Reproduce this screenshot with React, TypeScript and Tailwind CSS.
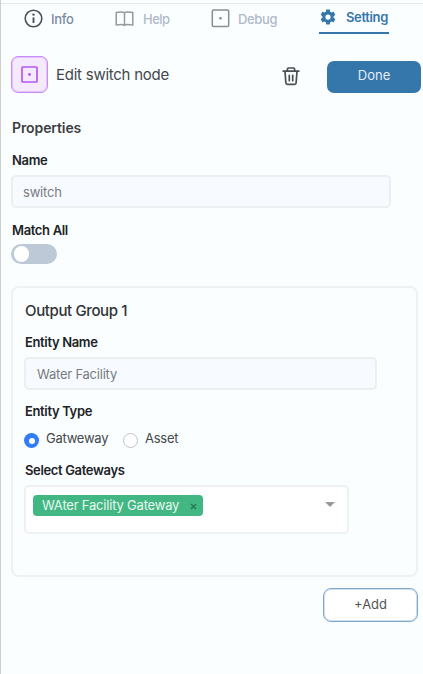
import React from "react";

const InfoIcon = () => (
  <svg width="20" height="20" viewBox="0 0 20 20" fill="none" stroke="#4d5157" strokeWidth="1.6">
    <circle cx="9.500" cy="9.500" r="8.300" />
    <path d="M9.500 8.400v5.600" strokeWidth="1.900" />
    <circle cx="9.500" cy="5.600" r="1.200" fill="#4d5157" stroke="none" />
  </svg>
);

const BookIcon = () => (
  <svg width="20" height="18" viewBox="0 0 20 18" fill="none" stroke="#96999c" strokeWidth="1.5" strokeLinejoin="round">
    <path d="M9.500 2.800C8.700 1.900 7.700 1.900 6.500 1.900c-1.800 0-3.500.1-5.300.6v12.600c1.800-.5 3.500-.7 5.300-.7 1.300 0 2.200.2 3 1 .8-.8 1.700-1 3-1 1.800 0 3.500.2 5.300.7V2.500c-1.800-.5-3.500-.6-5.300-.6-1.200 0-2.200 0-3 .9zM9.500 2.800v12.600" />
  </svg>
);

const DebugIcon = () => (
  <svg width="19" height="19" viewBox="0 0 19 19" fill="none">
    <rect x="1.300" y="1" width="16.400" height="16.400" rx="1.200" stroke="#8b8e91" strokeWidth="1.500" />
    <circle cx="9.500" cy="9.300" r="1.300" fill="#8b8e91" />
  </svg>
);

const GearIcon = () => (
  <svg width="18" height="18" viewBox="0 0 24 24" fill="#3576ab">
    <path d="M19.430 12.980c.04-.32.070-.64.070-.98s-.03-.66-.07-.98l2.110-1.650c.19-.15.240-.42.120-.64l-2-3.460c-.12-.22-.39-.3-.61-.22l-2.490 1c-.52-.4-1.080-.73-1.690-.98l-.38-2.650C14.460 2.180 14.250 2 14 2h-4c-.25 0-.46.18-.49.42l-.38 2.650c-.61.25-1.170.59-1.690.98l-2.490-1c-.23-.09-.49 0-.61.22l-2 3.460c-.13.22-.07.49.12.64l2.110 1.650c-.04.32-.07.65-.07.98s.03.66.07.98l-2.110 1.650c-.19.15-.24.42-.12.64l2 3.460c.12.22.39.3.61.22l2.490-1c.52.4 1.080.73 1.690.98l.38 2.650c.03.24.24.42.49.42h4c.25 0 .46-.18.49-.42l.38-2.650c.61-.25 1.170-.59 1.690-.98l2.490 1c.23.09.49 0 .61-.22l2-3.460c.12-.22.07-.49-.12-.64l-2.110-1.650zM12 15.500A3.500 3.500 0 1 1 12 8.500a3.500 3.500 0 0 1 0 7z" />
  </svg>
);

const TrashIcon = () => (
  <svg width="18" height="20" viewBox="0 0 18 20" fill="none" stroke="#4b4f54" strokeWidth="1.700" strokeLinecap="round" strokeLinejoin="round">
    <path d="M1.200 5.200h15.600M5 5l.6-2.200c.1-.5.400-.8.900-.8h5c.5 0 .8.300.9.800L13 5M3 5.500l.9 11.500c.1.900.6 1.400 1.500 1.400h7.200c.9 0 1.400-.5 1.500-1.400L15 5.500M7.300 9.300v5.400M10.700 9.300v5.400" />
  </svg>
);

const label = "h-5 whitespace-nowrap text-[13px] font-semibold leading-5 tracking-[-0.35px] text-[#202326]";

export default function App() {
  return (
    <div className="h-[674px] w-[423px] overflow-hidden border-l border-[#cdcfd1] bg-[#fbfeff] font-['Inter',sans-serif]">
      <div className="h-1 border-b border-[#e6e7ea] bg-[#fbfeff]" />
      <nav className="flex h-[30px] pl-[23px] text-[13px] font-medium leading-5">
        <div className="flex w-[91px] gap-[7px] pt-[5px]">
          <InfoIcon />
          <span className="tracking-[-0.3px] text-[#7b8ba3]">Info</span>
        </div>
        <div className="flex w-24 gap-2 pt-[5px] text-[#b0b9c8]">
          <span className="pt-px"><BookIcon /></span>
          <span className="tracking-[-0.5px]">Help</span>
        </div>
        <div className="flex w-[108px] gap-2 pt-[5px] text-[#b0b9c8]">
          <DebugIcon />
          <span className="tracking-[-0.35px]">Debug</span>
        </div>
        <div className="flex h-[30px] w-[70px] gap-[9px] border-b-2 border-[#3576ab] pt-[3px] text-[#3576ab]">
          <span className="pt-px"><GearIcon /></span>
          <span className="font-semibold tracking-[-0.35px]">Setting</span>
        </div>
      </nav>

      <header className="mt-[22px] flex h-[38px] items-center pl-[10px]">
        <div className="-mt-px flex h-[37px] w-[37px] items-center justify-center rounded-[7px] border border-[#c98cfa] bg-[#f5e9fe] shadow-[inset_0_0_0_1px_#e2c3fc]">
          <svg width="17" height="17" viewBox="0 0 17 17" fill="none">
            <rect x="1" y="1" width="15" height="15" rx="0.800" stroke="#b657f4" strokeWidth="1.700" />
            <circle cx="8.500" cy="8.500" r="1.400" fill="#b657f4" />
          </svg>
        </div>
        <h1 className="ml-2 w-[226px] whitespace-nowrap text-[15px] leading-5 tracking-[-0.25px] text-[#44474a]">Edit switch node</h1>
        <span className="mt-[2px]"><TrashIcon /></span>
        <button className="ml-[27px] mt-[3px] h-8 w-[94px] shrink-0 rounded-[7px] bg-[#3576ab] pb-1 text-[13px] leading-5 text-[#e4edf5]">Done</button>
      </header>

      <main className="pl-[10px]">
        <h2 className="mt-6 h-5 pl-px text-[14px] font-semibold leading-5 tracking-[-0.1px] text-[#3c3f42]">Properties</h2>
        <div className={`mt-3 pl-px ${label}`}>Name</div>
        <div className="mt-[5px] h-[33px] w-[380px] rounded-[5px] border-2 border-[#edeef0] bg-[#f7fbff] pl-[10px] text-[13px] leading-[30px] tracking-[-0.2px] text-[#777b80]">switch</div>
        <div className={`mt-3 pl-px ${label}`}>Match All</div>
        <div className="mt-1 flex h-5 w-[46px] items-center rounded-full bg-[#bec9d8] pl-[3px]">
          <div className="h-4 w-[15px] rounded-full bg-white" />
        </div>

        <section className="mt-[22px] h-[291px] w-[407px] rounded-[8px] border-2 border-[#eff0f1] pl-[11px]">
          <h2 className="mt-[13px] h-5 pl-px text-[15px] font-medium leading-5 tracking-[-0.37px] text-[#303336]">Output Group 1</h2>
          <div className={`mt-[11px] pl-px ${label}`}>Entity Name</div>
          <div className="mt-[5px] h-[33px] w-[353px] rounded-[5px] border-2 border-[#edeef0] bg-[#f7fbff] pl-[11px] text-[13px] leading-[30px] tracking-[-0.22px] text-[#777b80]">Water Facility</div>
          <div className={`mt-[11px] pl-px ${label}`}>Entity Type</div>
          <div className="mt-[7px] flex h-5 whitespace-nowrap text-[13px] leading-5 tracking-[-0.25px] text-[#44474a]">
            <span className="mt-[5px] flex h-[15px] w-[15px] items-center justify-center rounded-full bg-[#307df7]"><i className="h-[6px] w-[6px] rounded-full bg-white" /></span>
            <span className="ml-[7px] w-[77px]">Gatweway</span>
            <span className="mt-[5px] h-[15px] w-[15px] rounded-full border border-[#bfc2c5] bg-white" />
            <span className="ml-[7px]">Asset</span>
          </div>
          <div className={`mt-3 pl-px ${label}`}>Select Gateways</div>
          <div className="mt-[5px] flex h-[49px] w-[325px] justify-between rounded-[5px] border-2 border-[#eff0f1] bg-white pl-[7px]">
            <div className="mt-2 flex h-[21px] w-[170px] items-center justify-between rounded-[4px] bg-[#42b783] pl-[9px] pr-[6px] text-[13px] leading-5 tracking-[-0.2px] text-[#e8f8f0]">
              <span className="-mt-[2px] whitespace-nowrap">WAter Facility Gateway</span>
              <svg className="mt-px" width="7" height="7" viewBox="0 0 7 7" stroke="#267a55" strokeWidth="1.500"><path d="M1 1l5 5M6 1L1 6" /></svg>
            </div>
            <svg className="mr-[12px] mt-[15px]" width="10" height="5" viewBox="0 0 10 5" fill="#999"><path d="M0 0h10L5 5z" /></svg>
          </div>
        </section>

        <button className="ml-[312px] mt-[11px] block h-[34px] w-[95px] rounded-[8px] border border-[#7fa8cf] bg-white pb-[2px] text-[13px] leading-5 text-[#505357] shadow-[inset_0_0_0_1px_#cfdfed]">+Add</button>
      </main>
    </div>
  );
}
